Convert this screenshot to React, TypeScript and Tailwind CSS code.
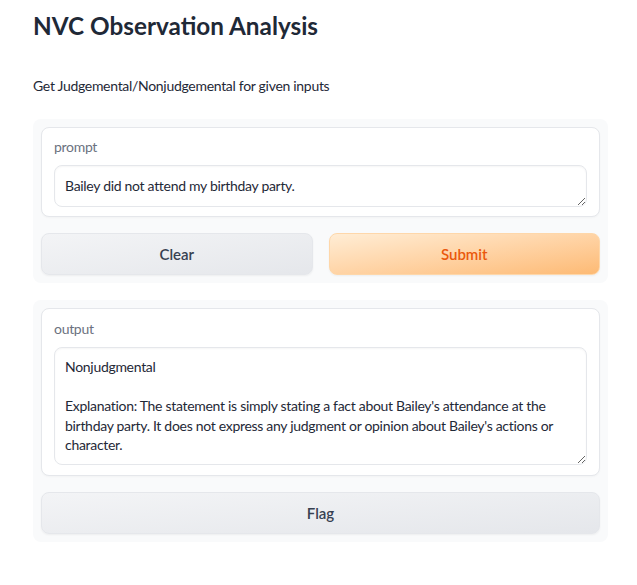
import React from "react";

export default function App() {
  const font = { fontFamily: 'Lato, "Noto Sans", sans-serif' };
  return (
    <div className="min-h-[585px] w-[637px] bg-white text-[#1f2937]" style={font}>
      <div className="pl-[33px] pt-[10px] pb-[20px]">
        <h1 className="text-[24.3px] leading-[32px] font-bold text-[#1f2937]">NVC Observation Analysis</h1>
        <p className="mt-[34px] text-[14px] leading-[20px] tracking-[-0.3px] text-[#1f2937]">Get Judgemental/Nonjudgemental for given inputs</p>

        <div className="mt-[23px] w-[575px] rounded-[8px] bg-[#f9fafb] p-[8px] flex flex-col gap-[16px]">
          <div className="rounded-[8px] border border-[#e5e7eb] bg-white px-[12px] pt-[9px] pb-[9px] shadow-[0_1px_2px_rgba(0,0,0,0.03)]">
            <div className="text-[14px] leading-[20px] tracking-[-0.3px] text-[#6b7280]">prompt</div>
            <div className="mt-[8px] relative">
              <textarea
                readOnly
                className="block w-full h-[42px] resize-y rounded-[8px] border border-[#e5e7eb] bg-white px-[10px] py-[10px] text-[14px] leading-[20px] tracking-[-0.3px] text-[#1f2937] outline-none shadow-[inset_0_1px_2px_rgba(0,0,0,0.04)]"
                style={font}
                value="Bailey did not attend my birthday party."
              />
            </div>
          </div>
          <div className="flex gap-[16px]">
            <button
              className="flex-1 h-[42px] rounded-[8px] border border-[#e5e7eb] bg-gradient-to-br from-[#f3f4f6] to-[#e5e7eb] text-[15px] font-semibold text-[#374151] shadow-[0_1px_2px_rgba(0,0,0,0.05)]"
              style={font}
            >
              Clear
            </button>
            <button
              className="flex-1 h-[42px] rounded-[8px] border border-[#fed7aa] bg-gradient-to-br from-[#ffedd5] to-[#fdba74] text-[15px] font-semibold text-[#ea580c] shadow-[0_1px_2px_rgba(0,0,0,0.05)]"
              style={font}
            >
              Submit
            </button>
          </div>
        </div>

        <div className="mt-[17px] w-[575px] rounded-[8px] bg-[#f9fafb] p-[8px] flex flex-col gap-[16px]">
          <div className="rounded-[8px] border border-[#e5e7eb] bg-white px-[12px] pt-[10px] pb-[10px] shadow-[0_1px_2px_rgba(0,0,0,0.03)]">
            <div className="text-[14px] leading-[20px] tracking-[-0.3px] text-[#6b7280]">output</div>
            <div className="mt-[8px]">
              <textarea
                readOnly
                className="block w-full h-[118px] resize-y rounded-[8px] border border-[#e5e7eb] bg-white px-[10px] py-[9px] text-[14px] leading-[19.5px] tracking-[-0.3px] text-[#1f2937] outline-none shadow-[inset_0_1px_2px_rgba(0,0,0,0.04)]"
                style={font}
                value={"Nonjudgmental\n\nExplanation: The statement is simply stating a fact about Bailey's attendance at the birthday party. It does not express any judgment or opinion about Bailey's actions or character."}
              />
            </div>
          </div>
          <button
            className="w-full h-[42px] rounded-[8px] border border-[#e5e7eb] bg-gradient-to-br from-[#f3f4f6] to-[#e5e7eb] text-[15px] font-semibold text-[#374151] shadow-[0_1px_2px_rgba(0,0,0,0.05)]"
            style={font}
          >
            Flag
          </button>
        </div>
      </div>
    </div>
  );
}
